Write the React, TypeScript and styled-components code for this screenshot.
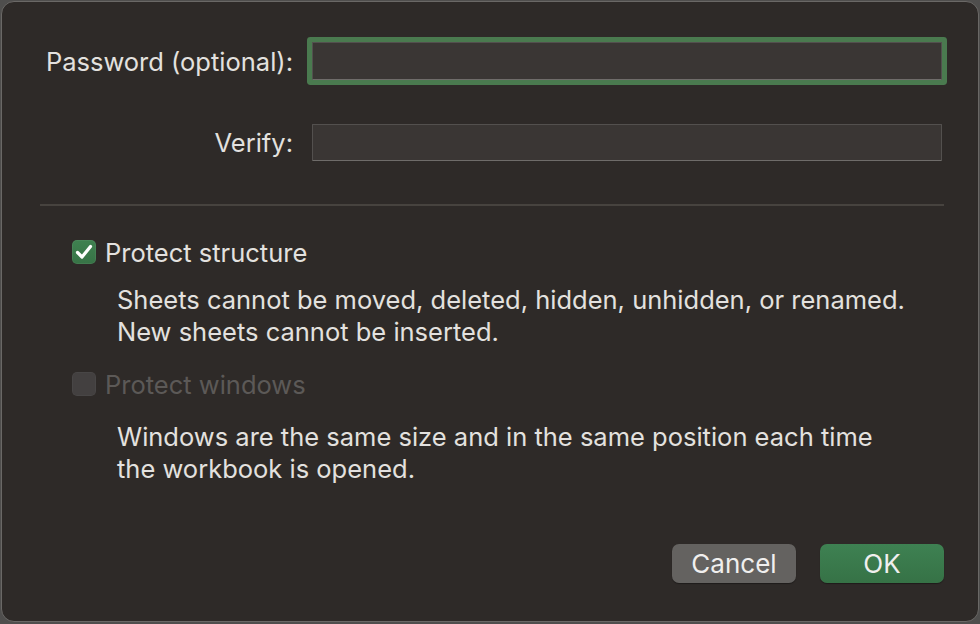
import styled, { createGlobalStyle } from 'styled-components';

const GlobalStyle = createGlobalStyle`
  html, body {
    margin: 0;
    padding: 0;
    background: #4f4e4d;
  }
  * {
    box-sizing: border-box;
  }
`;

const Dialog = styled.div`
  width: 978px;
  height: 621px;
  margin: 1px 0 0 1px;
  padding: 40px 34px 38px 38px;
  display: flex;
  flex-direction: column;
  background: #2e2a28;
  border: 1px solid #6a6866;
  border-radius: 13px;
  font-family: Inter, 'Noto Sans', sans-serif;
  font-size: 25.5px;
  color: #e3e1df;
`;

const FormGrid = styled.div`
  display: grid;
  grid-template-columns: 253px 1fr;
  column-gap: 19px;
  row-gap: 44px;
  margin-right: 2px;
  align-items: center;
`;

const Label = styled.label`
  text-align: right;
  white-space: nowrap;
`;

const Field = styled.input<{ $focused?: boolean }>`
  display: block;
  width: 100%;
  height: ${({ $focused }) => ($focused ? '38px' : '37px')};
  margin: 0;
  padding: 0 8px;
  background: #3a3634;
  border: 1px solid #53504e;
  border-bottom-color: #6f6c6a;
  border-radius: 1px;
  outline: none;
  font: inherit;
  color: inherit;
  box-shadow: ${({ $focused }) => ($focused ? '0 0 0 5px #4a7a4f' : 'none')};
`;

const Separator = styled.hr`
  margin: 43px 0 0;
  height: 2px;
  border: none;
  background: #47433f;
`;

const Options = styled.div`
  display: flex;
  flex-direction: column;
  padding-left: 32px;
  margin-top: 30px;
`;

const OptionRow = styled.label<{ $disabled?: boolean; $gap?: number }>`
  display: flex;
  align-items: center;
  gap: 9px;
  height: 32px;
  margin-top: ${({ $gap }) => $gap ?? 0}px;
  color: ${({ $disabled }) => ($disabled ? '#5c5957' : '#e3e1df')};
`;

const Box = styled.span<{ $checked?: boolean; $disabled?: boolean }>`
  width: 24px;
  height: 24px;
  flex: none;
  display: flex;
  align-items: center;
  justify-content: center;
  border-radius: 5px;
  background: ${({ $checked, $disabled }) =>
    $checked ? 'linear-gradient(#3f8150, #377346)' : $disabled ? '#434040' : '#5a5755'};
  box-shadow: ${({ $checked }) =>
    $checked ? 'inset 0 0 0 1px rgba(255,255,255,0.06)' : 'inset 0 0 0 1px rgba(255,255,255,0.03)'};
`;

const Description = styled.p<{ $gap: number }>`
  margin: ${({ $gap }) => $gap}px 0 0 45px;
  line-height: 32px;
`;

const Buttons = styled.div`
  margin-top: auto;
  display: flex;
  justify-content: flex-end;
  gap: 24px;
`;

const Button = styled.button<{ $primary?: boolean }>`
  width: 124px;
  height: 39px;
  border: none;
  border-radius: 7px;
  font: inherit;
  font-size: 26px;
  color: #f0efee;
  background: ${({ $primary }) =>
    $primary ? 'linear-gradient(#3e8152, #367246)' : '#646260'};
  box-shadow: 0 1px 1px rgba(0, 0, 0, 0.35);
`;

const Check = () => (
  <svg width="22" height="22" viewBox="0 0 22 22" fill="none">
    <path
      d="M4.5 11.5 L9 16 L17.5 5.5"
      stroke="#ffffff"
      strokeWidth="3.2"
      strokeLinecap="round"
      strokeLinejoin="round"
    />
  </svg>
);

export default function App() {
  return (
    <>
      <GlobalStyle />
      <Dialog>
        <FormGrid>
          <Label>Password (optional):</Label>
          <Field type="password" $focused />
          <Label>Verify:</Label>
          <Field type="password" />
        </FormGrid>
        <Separator />
        <Options>
          <OptionRow>
            <Box $checked>
              <Check />
            </Box>
            Protect structure
          </OptionRow>
          <Description $gap={16}>
            Sheets cannot be moved, deleted, hidden, unhidden, or renamed.
            <br />
            New sheets cannot be inserted.
          </Description>
          <OptionRow $disabled $gap={20}>
            <Box $disabled />
            Protect windows
          </OptionRow>
          <Description $gap={21}>
            Windows are the same size and in the same position each time
            <br />
            the workbook is opened.
          </Description>
        </Options>
        <Buttons>
          <Button>Cancel</Button>
          <Button $primary>OK</Button>
        </Buttons>
      </Dialog>
    </>
  );
}
